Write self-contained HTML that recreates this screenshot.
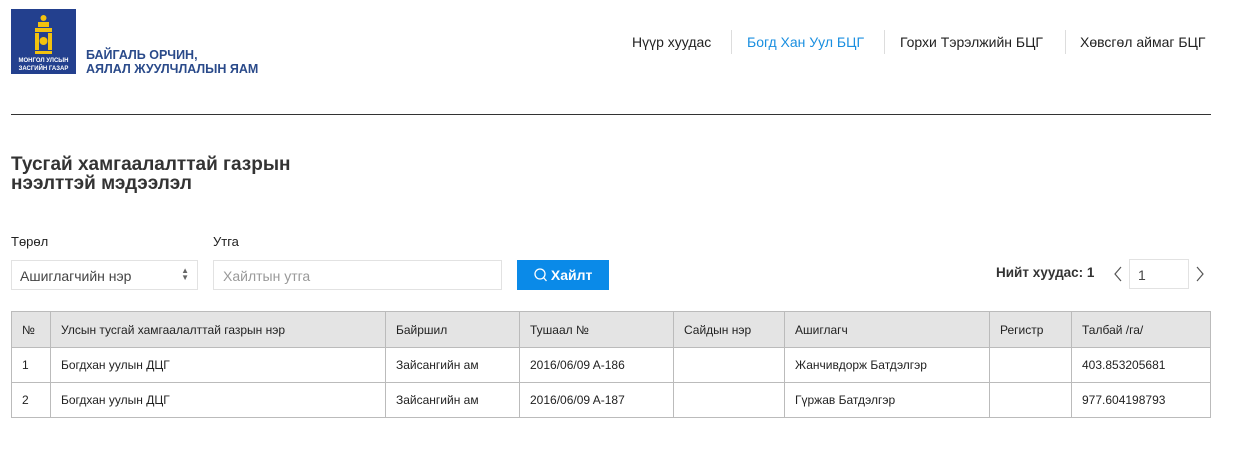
<!DOCTYPE html>
<html><head><meta charset="utf-8"><style>
*{box-sizing:border-box;margin:0;padding:0}
body{width:1238px;height:453px;background:#fff;font-family:"Liberation Sans",sans-serif;color:#222;position:relative;overflow:hidden}
.a{position:absolute}
.logo{left:11px;top:9px;width:65px;height:65px;background:#23408e}
.lt{left:86px;top:48px;color:#2a4a8a;font-weight:bold;font-size:12.5px;line-height:14px}
.nav{top:34px;font-size:14px;color:#222}
.sep{top:30px;width:1px;height:24px;background:#ddd}
table{position:absolute;left:11px;top:311px;width:1200px;border-collapse:collapse;font-size:12px}
td,th{border:1px solid #bbb;padding:0 10px;text-align:left;font-weight:normal;height:35px}
th{background:#e4e4e4;height:36px}
</style></head><body>
<div class="a logo">
<svg width="65" height="65" viewBox="0 0 65 65"><g fill="#f2c20f"><circle cx="32.5" cy="9" r="3"/><rect x="27" y="13" width="11" height="5"/><rect x="24" y="19" width="17" height="4"/><rect x="24" y="24" width="4" height="17"/><rect x="37" y="24" width="4" height="17"/><circle cx="32.5" cy="32" r="4"/><rect x="24" y="42" width="17" height="3"/></g>
<text x="32.5" y="53" fill="#fff" font-size="6" font-weight="bold" text-anchor="middle" font-family="Liberation Sans">МОНГОЛ УЛСЫН</text>
<text x="32.5" y="61" fill="#fff" font-size="6" font-weight="bold" text-anchor="middle" font-family="Liberation Sans">ЗАСГИЙН ГАЗАР</text></svg></div>
<div class="a lt">БАЙГАЛЬ ОРЧИН,<br>АЯЛАЛ ЖУУЛЧЛАЛЫН ЯАМ</div>
<div class="a nav" style="left:632px">Нүүр хуудас</div>
<div class="a sep" style="left:731px"></div>
<div class="a nav" style="left:747px;color:#1a8fe0">Богд Хан Уул БЦГ</div>
<div class="a sep" style="left:884px"></div>
<div class="a nav" style="left:900px">Горхи Тэрэлжийн БЦГ</div>
<div class="a sep" style="left:1065px"></div>
<div class="a nav" style="left:1080px">Хөвсгөл аймаг БЦГ</div>
<div class="a" style="left:11px;top:114px;width:1200px;height:1px;background:#333"></div>
<div class="a" style="left:11px;top:155px;font-size:19px;line-height:19px;color:#333;font-weight:bold">Тусгай хамгаалалттай газрын<br>нээлттэй мэдээлэл</div>
<div class="a" style="left:11px;top:234px;font-size:13px">Төрөл</div>
<div class="a" style="left:213px;top:234px;font-size:13px">Утга</div>
<div class="a" style="left:11px;top:260px;width:187px;height:30px;border:1px solid #e2e2e2;font-size:14px;color:#444;padding:7px 8px">Ашиглагчийн нэр<span style="position:absolute;right:8px;top:6px;font-size:8px;line-height:7px;color:#666">▲<br>▼</span></div>
<div class="a" style="left:213px;top:260px;width:289px;height:30px;border:1px solid #e2e2e2;font-size:14px;color:#999;padding:7px 9px">Хайлтын утга</div>
<div class="a" style="left:517px;top:260px;width:92px;height:30px;background:#0a8ae8;color:#fff;font-size:14px;font-weight:bold;padding:7px 0 0 17px"><svg width="13" height="14" style="vertical-align:-2px" viewBox="0 0 13 14"><circle cx="6" cy="6" r="5" fill="none" stroke="#fff" stroke-width="1.3"/><path d="M9.5 9.5L12.5 13" stroke="#fff" stroke-width="1.3"/></svg> Хайлт</div>
<div class="a" style="left:996px;top:265px;font-size:13.5px;font-weight:bold;color:#333">Нийт хуудас: 1</div>
<svg class="a" style="left:1113px;top:266px" width="10" height="16"><path d="M8 1L2 8L8 15" fill="none" stroke="#555" stroke-width="1.2"/></svg>
<div class="a" style="left:1129px;top:259px;width:60px;height:30px;border:1px solid #e2e2e2;font-size:14px;color:#444;padding:7px 8px">1</div>
<svg class="a" style="left:1195px;top:266px" width="10" height="16"><path d="M2 1L8 8L2 15" fill="none" stroke="#555" stroke-width="1.2"/></svg>
<table>
<tr><th style="width:39px">№</th><th style="width:335px">Улсын тусгай хамгаалалттай газрын нэр</th><th style="width:134px">Байршил</th><th style="width:154px">Тушаал №</th><th style="width:111px">Сайдын нэр</th><th style="width:205px">Ашиглагч</th><th style="width:82px">Регистр</th><th>Талбай /га/</th></tr>
<tr><td>1</td><td>Богдхан уулын ДЦГ</td><td>Зайсангийн ам</td><td>2016/06/09 A-186</td><td></td><td>Жанчивдорж Батдэлгэр</td><td></td><td>403.853205681</td></tr>
<tr><td>2</td><td>Богдхан уулын ДЦГ</td><td>Зайсангийн ам</td><td>2016/06/09 A-187</td><td></td><td>Гүржав Батдэлгэр</td><td></td><td>977.604198793</td></tr>
</table>
</body></html>
